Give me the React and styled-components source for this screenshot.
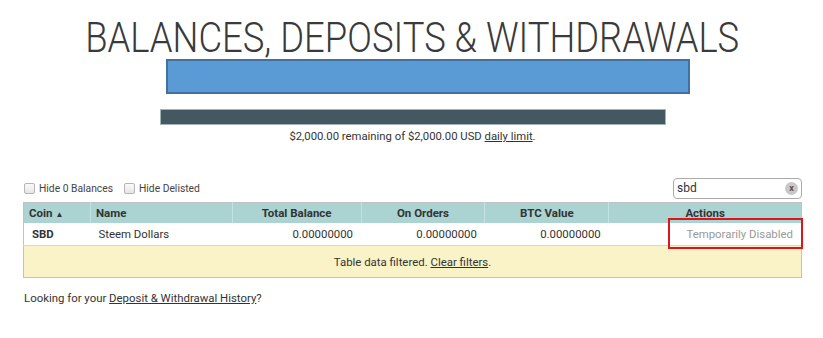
import React from 'react';
import styled, {createGlobalStyle} from 'styled-components';

const GlobalStyle = createGlobalStyle`
  html, body {
    margin: 0;
    padding: 0;
    background: #fff;
    font-family: Roboto, "Liberation Sans", sans-serif;
    color: #333;
  }
`;

const Page = styled.div`
  width: 823px;
  height: 338px;
  overflow: hidden;
  padding: 0 21px 0 23px;
  box-sizing: border-box;
`;

const Title = styled.h1`
  margin: 0;
  padding-top: 16px;
  font-weight: 300;
  font-size: 42px;
  line-height: 44px;
  text-align: center;
  color: #3a3a3a;
  white-space: nowrap;
  span {
    display: inline-block;
    transform: scaleX(0.867);
    transform-origin: center;
  }
`;

const Redaction = styled.div`
  width: 524px;
  height: 35px;
  margin: -1px 0 0 143px;
  box-sizing: border-box;
  background: #5b9bd5;
  border: 2px solid #41719c;
`;

const LimitBar = styled.div`
  width: 506px;
  height: 16px;
  margin: 15px 0 0 137px;
  box-sizing: border-box;
  background: #435860;
  border: 1px solid #9fb6b4;
`;

const LimitText = styled.p`
  margin: 5px 0 0;
  text-align: center;
  font-size: 11.3px;
  line-height: 14px;
  color: #333;
  a {
    color: #333;
    text-decoration: underline;
  }
`;

const Toolbar = styled.div`
  display: flex;
  align-items: center;
  justify-content: space-between;
  margin-top: 33px;
  height: 22px;
`;

const Filters = styled.div`
  display: flex;
  align-items: center;
  gap: 11px;
  padding-left: 1px;
`;

const CheckLabel = styled.label`
  display: flex;
  align-items: center;
  gap: 4px;
  font-size: 10.3px;
  color: #444;
`;

const Box = styled.span`
  width: 9px;
  height: 9px;
  border: 1px solid #b5b5b5;
  border-radius: 2px;
  background: linear-gradient(#fafafa, #e6e6e6);
`;

const Search = styled.div`
  position: relative;
  width: 129px;
  height: 21px;
  box-sizing: border-box;
  border: 1px solid #aaa;
  border-radius: 4px;
  display: flex;
  align-items: center;
  padding-left: 3px;
  font-size: 12px;
  color: #333;
`;

const ClearBtn = styled.span`
  position: absolute;
  right: 3px;
  top: 3px;
  width: 13px;
  height: 13px;
  border-radius: 50%;
  background: #c8c8c8;
  color: #555;
  font-size: 9px;
  font-weight: bold;
  line-height: 12px;
  text-align: center;
`;

const TableWrap = styled.div`
  position: relative;
  margin-top: 3px;
`;

const Table = styled.table`
  width: 779px;
  border-collapse: collapse;
  font-size: 11.4px;
  border: 1px solid #c2c2c2;
`;

const Th = styled.th`
  background: #aad3d2;
  height: 20px;
  padding: 0 5px;
  font-size: 11.5px;
  font-weight: bold;
  color: #333;
  text-align: ${p => p.align || 'center'};
  border-left: 1px solid #c3e2e1;
  &:first-child {
    border-left: none;
  }
`;

const Td = styled.td`
  height: 22px;
  padding: 0 8px;
  background: #fff;
  text-align: ${p => p.align || 'left'};
  font-weight: ${p => (p.bold ? 'bold' : 'normal')};
  color: ${p => p.muted ? '#999' : '#333'};
  border-bottom: 1px solid #d6d6d6;
`;

const Notice = styled.td`
  height: 31px;
  padding: 0;
  background: #fbf3c8;
  text-align: center;
  color: #333;
  a {
    color: #333;
    text-decoration: underline;
  }
`;

const Highlight = styled.div`
  position: absolute;
  left: 645px;
  top: 16px;
  width: 135px;
  height: 31px;
  box-sizing: border-box;
  border: 2px solid #e0141b;
`;

const Footer = styled.p`
  margin: 13px 0 0 1px;
  font-size: 11.4px;
  color: #333;
  a {
    color: #333;
    text-decoration: underline;
  }
`;

export default function App() {
  return (
    <Page>
      <GlobalStyle />
      <Title><span>BALANCES, DEPOSITS &amp; WITHDRAWALS</span></Title>
      <Redaction />
      <LimitBar />
      <LimitText>$2,000.00 remaining of $2,000.00 USD <a>daily limit</a>.</LimitText>

      <Toolbar>
        <Filters>
          <CheckLabel><Box />Hide 0 Balances</CheckLabel>
          <CheckLabel><Box />Hide Delisted</CheckLabel>
        </Filters>
        <Search>
          sbd
          <ClearBtn>x</ClearBtn>
        </Search>
      </Toolbar>

      <TableWrap>
        <Table>
          <colgroup>
            <col style={{width: 67}} />
            <col style={{width: 142}} />
            <col style={{width: 129}} />
            <col style={{width: 124}} />
            <col style={{width: 124}} />
            <col style={{width: 193}} />
          </colgroup>
          <thead>
            <tr>
              <Th align="left">Coin <span style={{fontSize: 8}}>▲</span></Th>
              <Th align="left">Name</Th>
              <Th>Total Balance</Th>
              <Th>On Orders</Th>
              <Th>BTC Value</Th>
              <Th>Actions</Th>
            </tr>
          </thead>
          <tbody>
            <tr>
              <Td bold>SBD</Td>
              <Td>Steem Dollars</Td>
              <Td align="right">0.00000000</Td>
              <Td align="right">0.00000000</Td>
              <Td align="right">0.00000000</Td>
              <Td align="right" muted>Temporarily Disabled</Td>
            </tr>
            <tr>
              <Notice colSpan={6}>Table data filtered. <a>Clear filters</a>.</Notice>
            </tr>
          </tbody>
        </Table>
        <Highlight />
      </TableWrap>

      <Footer>Looking for your <a>Deposit &amp; Withdrawal History</a>?</Footer>
    </Page>
  );
}
